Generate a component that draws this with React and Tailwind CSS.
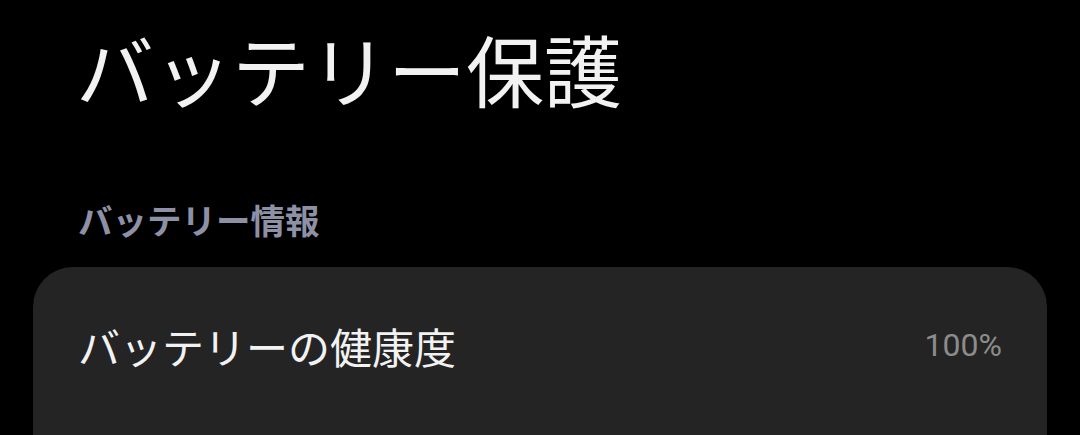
export default function App() {
  const jp = { fontFamily: '"Noto Sans CJK JP", "Noto Sans", sans-serif' };
  return (
    <div className="w-[1080px] h-[435px] bg-black overflow-hidden" style={jp}>
      <div className="pl-[76px] pt-[20px]">
        <h1 className="text-[78px] leading-[96px] font-normal text-[#f2f2f2]">バッテリー保護</h1>
      </div>
      <div className="pl-[78px] mt-[81px]">
        <h2 className="text-[34.5px] leading-[44px] font-bold text-[#8e91a6]">バッテリー情報</h2>
      </div>
      <div className="mx-[33px] mt-[26px] bg-[#242424] rounded-t-[40px] h-[200px] px-[45px] pt-[48px]">
        <div className="flex items-center justify-between h-[60px]">
          <span className="text-[42px] text-[#f2f2f2]">バッテリーの健康度</span>
          <span className="text-[32px] text-[#8c8c8c]" style={{ fontFamily: 'Roboto, "Noto Sans", sans-serif' }}>100%</span>
        </div>
      </div>
    </div>
  );
}
